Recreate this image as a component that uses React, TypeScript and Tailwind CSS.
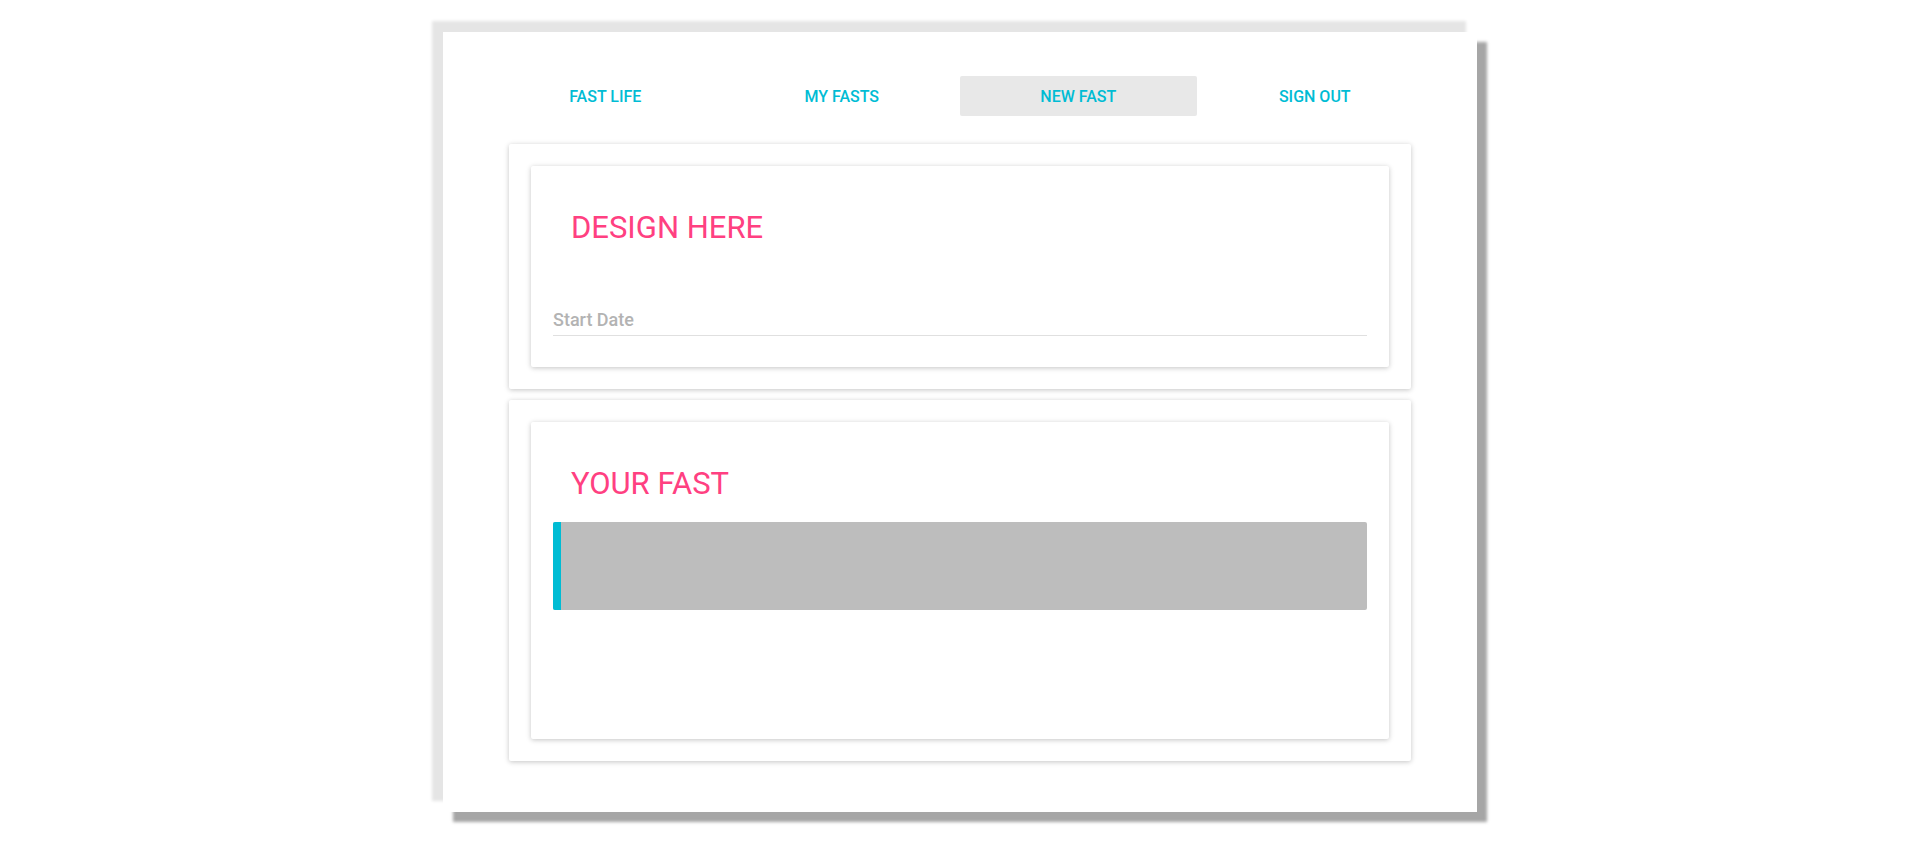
const tabs = ['Fast Life', 'My Fasts', 'New Fast', 'Sign Out'];

const paper = 'bg-white rounded-[2px] shadow-[0_1px_6px_rgba(0,0,0,0.12),0_1px_4px_rgba(0,0,0,0.12)]';

export default function App() {
  return (
    <div
      className="min-h-screen bg-white pt-[32px] pl-[11px] flex justify-center"
      style={{ fontFamily: 'Roboto, "Noto Sans", sans-serif' }}
    >
      <div className="w-[1034px] h-[780px] bg-white pt-[44px] px-[44px] shadow-[-11px_-11px_3px_#e5e5e5,10px_10px_3px_#a6a6a6]">
        <nav className="grid grid-cols-4 h-[40px]">
          {tabs.map((tab) => (
            <button
              key={tab}
              className={`h-[40px] pt-[1px] rounded-[2px] text-[16px] font-medium uppercase text-[#00bcd4] ${
                tab === 'New Fast' ? 'bg-[#e8e8e8]' : ''
              }`}
            >
              {tab}
            </button>
          ))}
        </nav>

        <div className="mx-[22px] mt-[28px]">
          <section className={`${paper} p-[22px]`}>
            <div className={`${paper} h-[201px] px-[22px] pt-[22px]`}>
              <h2 className="mt-[22px] ml-[18px] text-[31px] leading-[36px] font-normal text-[#ff4081]">
                DESIGN HERE
              </h2>
              <div className="mt-[62px] pb-[3px] border-b border-[#e0e0e0]">
                <span className="block text-[18px] leading-[24px] font-medium text-[#b3b3b3]">
                  Start Date
                </span>
              </div>
            </div>
          </section>

          <section className={`${paper} p-[22px] mt-[11px]`}>
            <div className={`${paper} h-[317px] px-[22px] pt-[22px]`}>
              <h2 className="mt-[22px] ml-[18px] text-[31px] leading-[36px] font-normal text-[#ff4081]">
                YOUR FAST
              </h2>
              <div className="mt-[20px] h-[88px] rounded-[2px] bg-[#bdbdbd] overflow-hidden flex">
                <div className="w-[8px] h-full bg-[#00bcd4]" />
              </div>
            </div>
          </section>
        </div>
      </div>
    </div>
  );
}
